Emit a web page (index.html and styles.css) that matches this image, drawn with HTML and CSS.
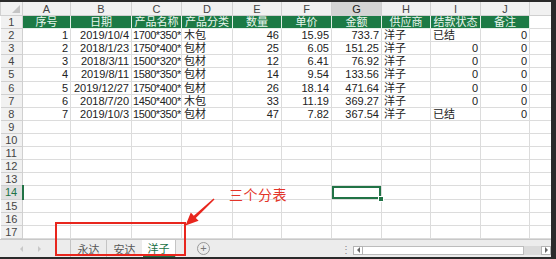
FILE: index.html
```html
<!DOCTYPE html>
<html lang="zh-CN">
<head>
    <meta charset="UTF-8">
    <meta name="viewport" content="width=device-width, initial-scale=1.0">
    <title>洋子 - 分表</title>
    <link rel="stylesheet" href="styles.css">
</head>
<body>
    <div class="window">
        <table class="sheet">
            <colgroup>
                <col class="w-rh"><col class="w-a"><col class="w-b"><col class="w-c"><col class="w-d"><col class="w-e">
                <col class="w-f"><col class="w-g"><col class="w-h"><col class="w-i"><col class="w-j"><col class="w-k">
            </colgroup>
            <tr class="col-head">
                <th class="corner"><span class="tri"></span></th>
                <th>A</th><th>B</th><th>C</th><th>D</th><th>E</th><th>F</th><th class="sel">G</th><th>H</th><th>I</th><th>J</th><th></th>
            </tr>
            <tr class="head-row">
                <th class="rh">1</th>
                <td>序号</td><td>日期</td><td>产品名称</td><td>产品分类</td><td>数量</td><td>单价</td><td>金额</td><td>供应商</td><td>结款状态</td><td>备注</td><td class="blank"></td>
            </tr>
            <tr>
                <th class="rh">2</th>
                <td class="n">1</td><td class="n">2019/10/4</td><td class="size">1700*350*</td><td>木包</td><td class="n">46</td><td class="n">15.95</td><td class="n">733.7</td><td>洋子</td><td>已结</td><td class="n">0</td><td></td>
            </tr>
            <tr>
                <th class="rh">3</th>
                <td class="n">2</td><td class="n">2018/1/23</td><td class="size">1750*400*</td><td>包材</td><td class="n">25</td><td class="n">6.05</td><td class="n">151.25</td><td>洋子</td><td class="n">0</td><td class="n">0</td><td></td>
            </tr>
            <tr>
                <th class="rh">4</th>
                <td class="n">3</td><td class="n">2018/3/11</td><td class="size">1500*320*</td><td>包材</td><td class="n">12</td><td class="n">6.41</td><td class="n">76.92</td><td>洋子</td><td class="n">0</td><td class="n">0</td><td></td>
            </tr>
            <tr>
                <th class="rh">5</th>
                <td class="n">4</td><td class="n">2019/8/11</td><td class="size">1580*350*</td><td>包材</td><td class="n">14</td><td class="n">9.54</td><td class="n">133.56</td><td>洋子</td><td class="n">0</td><td class="n">0</td><td></td>
            </tr>
            <tr>
                <th class="rh">6</th>
                <td class="n">5</td><td class="n">2019/12/27</td><td class="size">1750*400*</td><td>包材</td><td class="n">26</td><td class="n">18.14</td><td class="n">471.64</td><td>洋子</td><td class="n">0</td><td class="n">0</td><td></td>
            </tr>
            <tr>
                <th class="rh">7</th>
                <td class="n">6</td><td class="n">2018/7/20</td><td class="size">1450*400*</td><td>木包</td><td class="n">33</td><td class="n">11.19</td><td class="n">369.27</td><td>洋子</td><td class="n">0</td><td class="n">0</td><td></td>
            </tr>
            <tr>
                <th class="rh">8</th>
                <td class="n">7</td><td class="n">2019/10/3</td><td class="size">1500*350*</td><td>包材</td><td class="n">47</td><td class="n">7.82</td><td class="n">367.54</td><td>洋子</td><td>已结</td><td class="n">0</td><td></td>
            </tr>
            <tr><th class="rh">9</th><td></td><td></td><td></td><td></td><td></td><td></td><td></td><td></td><td></td><td></td><td></td></tr>
            <tr><th class="rh">10</th><td></td><td></td><td></td><td></td><td></td><td></td><td></td><td></td><td></td><td></td><td></td></tr>
            <tr><th class="rh">11</th><td></td><td></td><td></td><td></td><td></td><td></td><td></td><td></td><td></td><td></td><td></td></tr>
            <tr><th class="rh">12</th><td></td><td></td><td></td><td></td><td></td><td></td><td></td><td></td><td></td><td></td><td></td></tr>
            <tr><th class="rh">13</th><td></td><td></td><td></td><td></td><td></td><td></td><td></td><td></td><td></td><td></td><td></td></tr>
            <tr><th class="rh active">14</th><td></td><td></td><td></td><td></td><td></td><td></td><td class="cursor"></td><td></td><td></td><td></td><td></td></tr>
            <tr><th class="rh">15</th><td></td><td></td><td></td><td></td><td></td><td></td><td></td><td></td><td></td><td></td><td></td></tr>
            <tr><th class="rh">16</th><td></td><td></td><td></td><td></td><td></td><td></td><td></td><td></td><td></td><td></td><td></td></tr>
            <tr><th class="rh">17</th><td></td><td></td><td></td><td></td><td></td><td></td><td></td><td></td><td></td><td></td><td></td></tr>
        </table>

        <div class="tabbar">
            <div class="nav">
                <span class="arr arr-l"></span>
                <span class="arr arr-r"></span>
            </div>
            <div class="tabs">
                <div class="tab">永达</div>
                <div class="tab">安达</div>
                <div class="tab current"><span>洋子</span></div>
            </div>
            <div class="add-sheet">+</div>
            <div class="scroll-area">
                <div class="dots">⋮</div>
                <div class="hscroll">
                    <div class="sbtn"><span class="arr arr-l dark"></span></div>
                    <div class="thumb"></div>
                    <div class="track"></div>
                    <div class="sbtn"><span class="arr arr-r dark"></span></div>
                </div>
            </div>
        </div>
    </div>

    <!-- annotation drawn over the screenshot -->
    <div class="note-box"></div>
    <div class="note-text">三个分表</div>
    <svg class="note-arrow" width="556" height="259" viewBox="0 0 556 259">
        <polygon fill="#e8261d" points="213.5,198.4 193.8,215.7 190.8,212.6 185.5,225.5 198.6,220.8 195.8,217.9 214.5,199.6"/>
    </svg>
</body>
</html>
```

FILE: styles.css
```css
body {
    position: relative;
    margin: 0;
    width: 556px;
    height: 259px;
    overflow: hidden;
    background: #2a2a2a;
    font-family: 'Liberation Sans', 'Noto Sans CJK SC', sans-serif;
    color: #222;
}

.window {
    display: flex;
    flex-direction: column;
    width: 551px;
    height: 255px;
    margin: 2px 5px 2px 0;
    overflow: hidden;
    background: #fff;
}

/* grid */

.sheet {
    flex: none;
    width: 551px;
    table-layout: fixed;
    border-collapse: collapse;
    font-size: 11px;
}

.w-rh { width: 22px; }
.w-a { width: 48px; }
.w-b { width: 61px; }
.w-c { width: 50px; }
.w-d { width: 51px; }
.w-e { width: 49px; }
.w-f { width: 50px; }
.w-g { width: 50px; }
.w-h { width: 49px; }
.w-i { width: 50px; }
.w-j { width: 49px; }
.w-k { width: 22px; }

.sheet td,
.sheet th {
    height: 12.12px;
    padding: 0 2px;
    line-height: 12px;
    border: 1px solid #dcdcdc;
    white-space: nowrap;
    overflow: hidden;
    font-weight: normal;
    text-align: left;
}

.sheet td.n { text-align: right; }

.sheet td.size {
    padding: 0 1px;
    letter-spacing: -0.4px;
}

.sheet .col-head th {
    height: 13px;
    background: #f1f1f1;
    color: #444;
    text-align: center;
    border-color: #d0d0d0;
    border-top: none;
}

.sheet .col-head th.sel {
    background: #d4d4d4;
    color: #222;
}

.corner {
    position: relative;
}

.tri {
    position: absolute;
    right: 2px;
    bottom: 2px;
    border-left: 8px solid transparent;
    border-bottom: 8px solid #c4c4c4;
}

.sheet th.rh {
    background: #f1f1f1;
    color: #444;
    text-align: center;
    border-color: #d0d0d0;
    border-left: none;
    padding: 0;
}

.sheet th.rh.active {
    background: #e0e0e0;
    color: #217346;
    border-right: 2px solid #217346;
}

.head-row td {
    background: #1c7a45;
    color: #e9f6ee;
    text-align: center;
    border-color: #e4efe8;
}

.head-row td.blank {
    background: #fff;
    border-color: #dcdcdc;
}

.sheet td.cursor {
    position: relative;
    box-shadow: inset 0 0 0 2px #217346;
    overflow: visible;
}

.cursor::after {
    content: '';
    position: absolute;
    right: -3px;
    bottom: -3px;
    width: 4px;
    height: 4px;
    background: #217346;
    border: 1px solid #fff;
}

/* sheet tabs */

.tabbar {
    flex: none;
    height: 18px;
    display: flex;
    align-items: stretch;
    background: #ececec;
    border-top: 1px solid #c8c8c8;
    font-size: 11px;
    color: #555;
}

.nav {
    width: 70px;
    display: flex;
    align-items: center;
    gap: 15px;
    padding-left: 20px;
    box-sizing: border-box;
}

.arr {
    display: block;
    width: 0;
    height: 0;
    border-top: 3px solid transparent;
    border-bottom: 3px solid transparent;
}

.arr-l { border-right: 3px solid #c8c8c8; }
.arr-r { border-left: 3px solid #c8c8c8; }
.arr-l.dark { border-right-color: #666; }
.arr-r.dark { border-left-color: #666; }

.tabs {
    display: flex;
}

.tab {
    display: flex;
    align-items: center;
    justify-content: center;
    width: 35px;
    border-left: 1px solid #c4c4c4;
}

.tab.current {
    width: 33px;
    background: #fff;
    color: #217346;
    border-left: none;
    border-right: 1px solid #c4c4c4;
}

.tab.current span {
    align-self: stretch;
    display: flex;
    align-items: center;
    padding: 0 5px;
    border-bottom: 2px solid #217346;
}

.add-sheet {
    align-self: center;
    width: 11px;
    height: 11px;
    margin-left: 21px;
    border: 1px solid #999;
    border-radius: 50%;
    font-size: 11px;
    line-height: 11px;
    text-align: center;
    color: #777;
}

.scroll-area {
    margin-left: auto;
    display: flex;
    align-items: center;
    gap: 2px;
    padding: 3px 0 0;
}

.dots {
    width: 10px;
    color: #888;
    font-size: 10px;
    line-height: 10px;
    text-align: center;
}

.hscroll {
    display: flex;
    width: 198px;
    height: 9px;
}

.sbtn {
    display: flex;
    align-items: center;
    justify-content: center;
    width: 8px;
    background: #fff;
    border: 1px solid #b4b4b4;
}

.thumb {
    width: 160px;
    background: #fff;
    border: 1px solid #bcbcbc;
    border-left: none;
}

.track {
    flex: 1;
    background: #dadada;
}

/* annotation */

.note-box {
    position: absolute;
    left: 55px;
    top: 222px;
    width: 127px;
    height: 30px;
    border: 2px solid #e8261d;
}

.note-text {
    position: absolute;
    left: 229px;
    top: 184px;
    font-size: 14px;
    letter-spacing: 0.5px;
    color: #e3352a;
}

.note-arrow {
    position: absolute;
    left: 0;
    top: 0;
    pointer-events: none;
}
```
